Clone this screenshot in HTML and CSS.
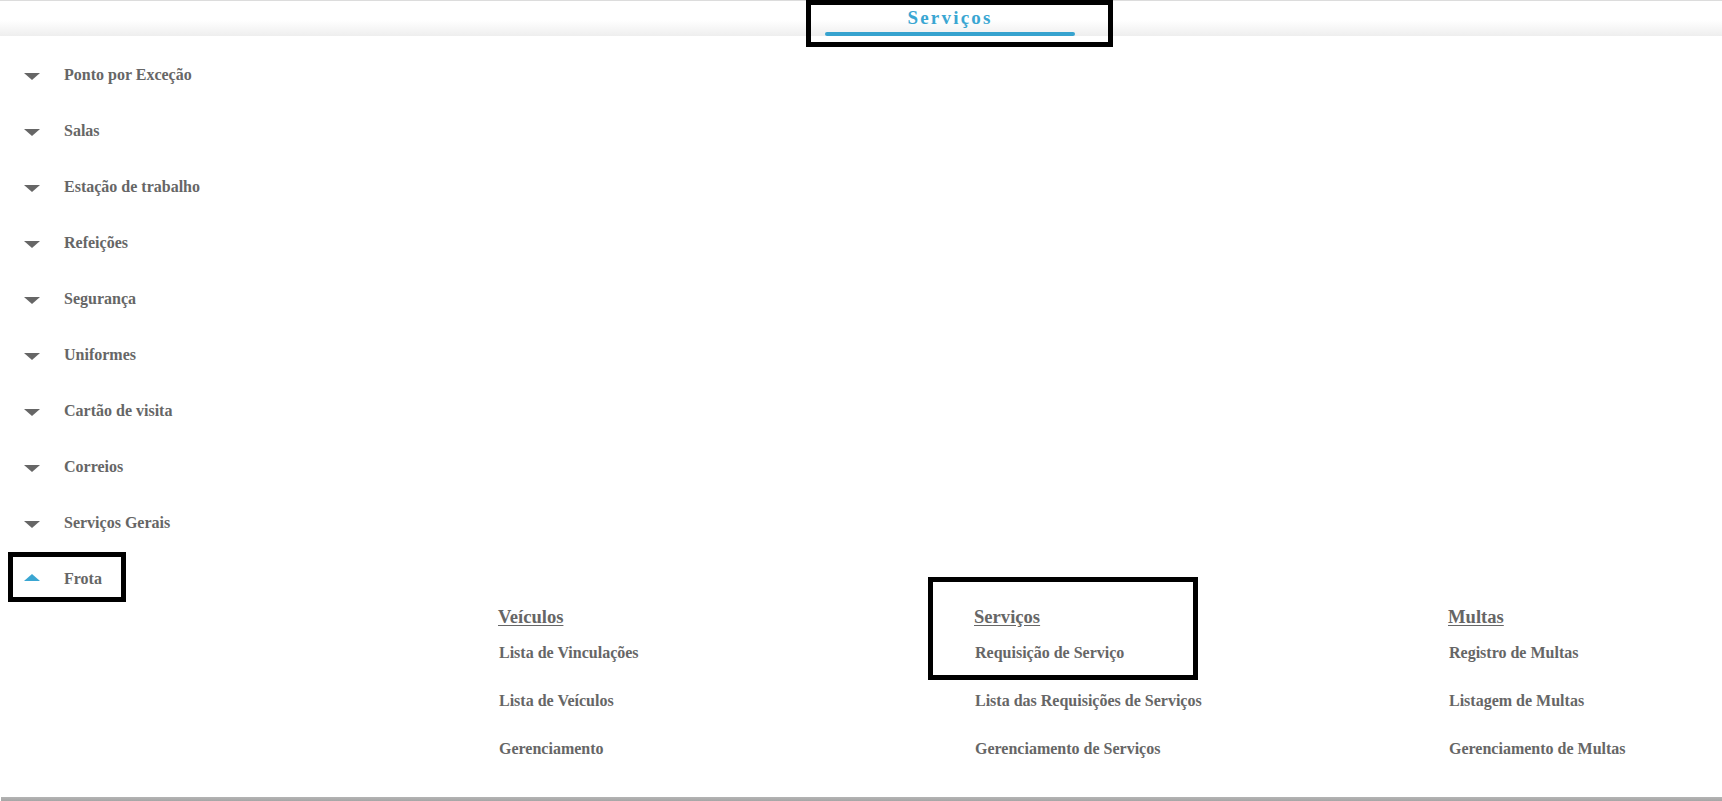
FILE: index.html
```html
<!DOCTYPE html>
<html lang="pt">
<head>
<meta charset="utf-8">
<title>Serviços</title>
<link rel="stylesheet" href="styles.css">
</head>
<body>
<div class="page">
  <header class="topbar">
    <div class="tab-frame">
      <div class="tab">
        <span class="tab-label">Serviços</span>
        <span class="tab-bar"></span>
      </div>
    </div>
  </header>

  <ul class="side-menu">
    <li class="side-item"><span class="caret"></span><span class="side-label">Ponto por Exceção</span></li>
    <li class="side-item"><span class="caret"></span><span class="side-label">Salas</span></li>
    <li class="side-item"><span class="caret"></span><span class="side-label">Estação de trabalho</span></li>
    <li class="side-item"><span class="caret"></span><span class="side-label">Refeições</span></li>
    <li class="side-item"><span class="caret"></span><span class="side-label">Segurança</span></li>
    <li class="side-item"><span class="caret"></span><span class="side-label">Uniformes</span></li>
    <li class="side-item"><span class="caret"></span><span class="side-label">Cartão de visita</span></li>
    <li class="side-item"><span class="caret"></span><span class="side-label">Correios</span></li>
    <li class="side-item"><span class="caret"></span><span class="side-label">Serviços Gerais</span></li>
    <li class="side-item side-item-open"><span class="caret caret-up"></span><span class="side-label">Frota</span></li>
  </ul>

  <section class="mega">
    <div class="mega-col">
      <div class="group">
        <a class="group-title">Veículos</a>
        <a class="link">Lista de Vinculações</a>
      </div>
      <div class="links">
        <a class="link">Lista de Veículos</a>
        <a class="link">Gerenciamento</a>
      </div>
    </div>
    <div class="mega-col">
      <div class="group group-framed">
        <a class="group-title">Serviços</a>
        <a class="link">Requisição de Serviço</a>
      </div>
      <div class="links">
        <a class="link">Lista das Requisições de Serviços</a>
        <a class="link">Gerenciamento de Serviços</a>
      </div>
    </div>
    <div class="mega-col">
      <div class="group">
        <a class="group-title">Multas</a>
        <a class="link">Registro de Multas</a>
      </div>
      <div class="links">
        <a class="link">Listagem de Multas</a>
        <a class="link">Gerenciamento de Multas</a>
      </div>
    </div>
  </section>
  <div class="bottom-shadow"></div>
</div>
</body>
</html>
```

FILE: styles.css
```css
* {
  box-sizing: border-box;
}

html, body {
  margin: 0;
  padding: 0;
  background: #ffffff;
}

body {
  font-family: "Liberation Serif", "Times New Roman", serif;
  color: #666666;
  width: 1722px;
  height: 801px;
  overflow: hidden;
}

.page {
  display: flex;
  flex-direction: column;
}

/* ---------- top bar ---------- */
.topbar {
  height: 36px;
  border-top: 1px solid #dcdcdc;
  background: linear-gradient(to bottom, #ffffff 0%, #ffffff 55%, #eeeeee 100%);
  display: flex;
  align-items: flex-start;
  padding-left: 806px;
  position: relative;
  z-index: 1;
}

.tab-frame {
  width: 307px;
  height: 47px;
  margin-top: -1px;
  border: 5px solid #000000;
  padding-left: 14px;
  flex: none;
}

.tab {
  width: 250px;
  display: flex;
  flex-direction: column;
  align-items: center;
}

.tab-label {
  display: block;
  height: 28px;
  line-height: 28px;
  margin-top: -1px;
  font-size: 19px;
  font-weight: bold;
  letter-spacing: 2.2px;
  color: #3aa6d2;
  padding-left: 0;
}

.tab-bar {
  display: block;
  width: 250px;
  height: 4px;
  border-radius: 2px;
  background: #37a3cf;
}

/* ---------- side menu ---------- */
.side-menu {
  list-style: none;
  margin: 0;
  padding: 11px 0 0 0;
}

.side-item {
  height: 56px;
  display: flex;
  align-items: center;
  padding-left: 24px;
}

.side-item-open {
  width: 118px;
  height: 50px;
  margin: 1px 0 -25px 8px;
  padding-left: 11px;
  padding-top: 3px;
  border: 5px solid #000000;
}

.caret {
  width: 0;
  height: 0;
  border-left: 8px solid transparent;
  border-right: 8px solid transparent;
  border-top: 7px solid #666666;
  margin-top: 2px;
  flex: none;
}

.caret-up {
  border-top: 0;
  border-bottom: 7px solid #3aa6d2;
  margin-top: -3px;
}

.side-label {
  margin-left: 24px;
  font-size: 16px;
  font-weight: bold;
  line-height: 20px;
  color: #666666;
  white-space: nowrap;
}

/* ---------- mega menu ---------- */
.mega {
  display: grid;
  grid-template-columns: 476px 474px 1fr;
  padding-left: 452px;
  padding-bottom: 38px;
}

.mega-col {
  display: flex;
  flex-direction: column;
}

.group {
  width: 270px;
  display: flex;
  flex-direction: column;
  gap: 16px;
  border: 5px solid transparent;
  padding: 25px 0 12px 41px;
}

.group-framed {
  border-color: #000000;
}

.group-title {
  font-size: 18.6px;
  line-height: 20px;
  font-weight: bold;
  text-decoration: underline;
  text-underline-offset: 2px;
  color: #666666;
  white-space: nowrap;
}

.links {
  display: flex;
  flex-direction: column;
  gap: 28px;
  padding: 11px 0 0 46px;
}

.link {
  font-size: 16px;
  line-height: 20px;
  font-weight: bold;
  color: #666666;
  white-space: nowrap;
  margin-left: 1px;
}

.bottom-shadow {
  height: 4px;
  margin-left: 1px;
  background: linear-gradient(to bottom, #b4b4b4, #a6a6a6);
}
```
